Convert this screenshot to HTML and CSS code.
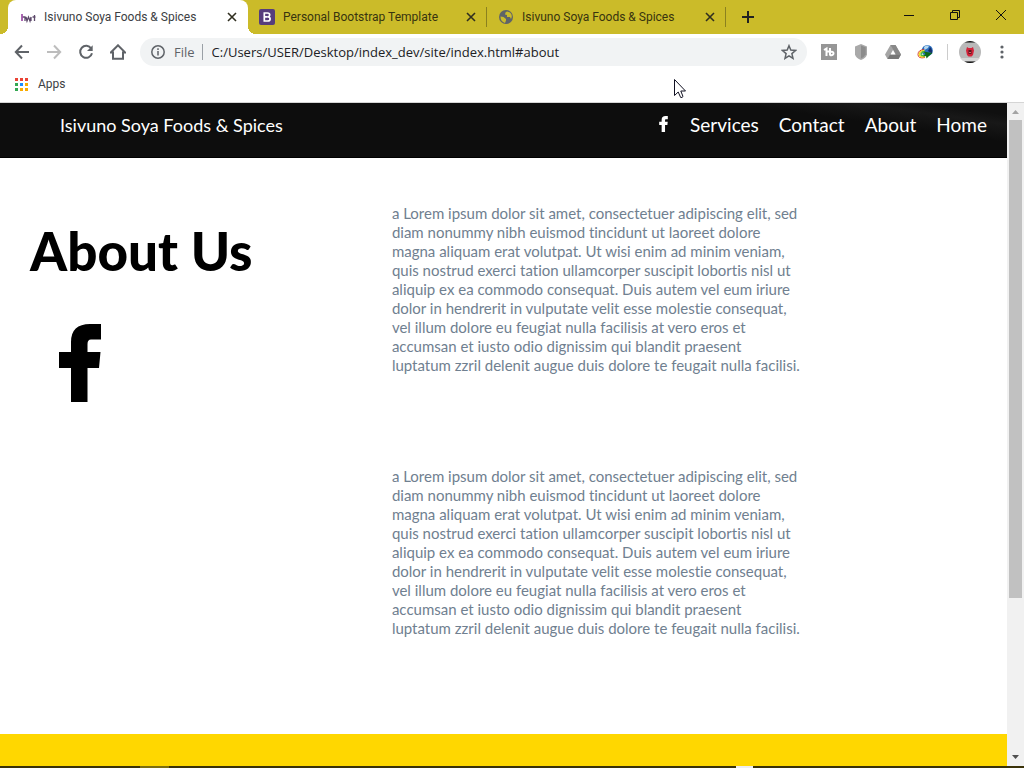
FILE: index.html
```
<!DOCTYPE html>
<html lang="en">
<head>
<meta charset="utf-8">
<title>Isivuno Soya Foods &amp; Spices</title>
<link rel="stylesheet" href="styles.css">
</head>
<body>
<div class="window">
  <div class="tabstrip">
    <div class="tab tab-active">
      <svg class="favicon" viewBox="0 0 16 16"><path d="M2 5v7M2 8h3v4M6 8l1 4 1.500-4 1.500 4 1-4M11 12V8M14.500 6v6M12.500 8h3" fill="none" stroke="#5d4a6b" stroke-width="1.300"/><path d="M2 5v7" stroke="#b05bb8" stroke-width="1.500"/></svg>
      <span class="tab-title">Isivuno Soya Foods &amp; Spices</span>
      <button class="tab-close" aria-label="Close tab"><svg viewBox="0 0 16 16"><path d="M4 4l8 8M12 4l-8 8"/></svg></button>
    </div>
    <div class="tab tab-ruled">
      <svg class="favicon" viewBox="0 0 16 16"><rect width="16" height="16" rx="2" fill="#563d7c"/><path d="M5.300 4h3.200q2.200 0 2.200 1.900 0 1.600-1.600 1.900 2 .2 2 2.100 0 2.100-2.500 2.100H5.300zM5.300 7.800h3.500" fill="none" stroke="#fff" stroke-width="1.700"/></svg>
      <span class="tab-title">Personal Bootstrap Template</span>
      <button class="tab-close" aria-label="Close tab"><svg viewBox="0 0 16 16"><path d="M4 4l8 8M12 4l-8 8"/></svg></button>
    </div>
    <div class="tab tab-ruled">
      <svg class="favicon" viewBox="0 0 16 16"><circle cx="8" cy="8" r="7" fill="#5f6368"/><path d="M2.500 7.500l3 .5 2.500 2v1.500l-1 2.500Q2.500 12.500 2.500 7.500zM9 2.500l-1.500 1-.5 2 2 .5v2h3l1 2q2-4-1-6.500z" fill="#cbbb29"/></svg>
      <span class="tab-title">Isivuno Soya Foods &amp; Spices</span>
      <button class="tab-close" aria-label="Close tab"><svg viewBox="0 0 16 16"><path d="M4 4l8 8M12 4l-8 8"/></svg></button>
    </div>
    <button class="new-tab" aria-label="New tab"><svg viewBox="0 0 16 16"><path d="M8 2v12M2 8h12"/></svg></button>
    <div class="window-controls">
      <button aria-label="Minimize"><svg viewBox="0 0 12 12"><path d="M1 6.500h10"/></svg></button>
      <button aria-label="Restore"><svg viewBox="0 0 12 12"><path d="M1.500 3.500h7v7h-7zM3.500 3.500v-2h7v7h-2"/></svg></button>
      <button aria-label="Close"><svg viewBox="0 0 12 12"><path d="M1 1l10 10M11 1L1 11"/></svg></button>
    </div>
  </div>

  <div class="toolbar">
    <button class="tool" aria-label="Back"><svg class="line" viewBox="0 0 16 16"><path d="M15 8H2M8 1.500L1.800 8 8 14.500"/></svg></button>
    <button class="tool" aria-label="Forward" disabled><svg class="line faint" viewBox="0 0 16 16"><path d="M1 8h13M8 1.500L14.200 8 8 14.500"/></svg></button>
    <button class="tool" aria-label="Reload"><svg class="line" viewBox="0 0 16 16"><path d="M13.200 4.500A6 6 0 1 0 14 9.300"/><path d="M14.700 1.200v5.800H9z" fill="#5f6368" stroke="none"/></svg></button>
    <button class="tool" aria-label="Home"><svg class="line" viewBox="0 0 16 16"><path d="M.8 8.500L8 1.300l7.200 7.200H13v6.300H3V8.500z"/></svg></button>
    <div class="omnibox">
      <svg class="line" viewBox="0 0 16 16"><circle cx="8" cy="8" r="6.200"/><path d="M8 7v4.500M8 4.200v1.700"/></svg>
      <span class="scheme">File</span>
      <input class="address" type="text" aria-label="Address" value="C:/Users/USER/Desktop/index_dev/site/index.html#about">
      <button class="star" aria-label="Bookmark this page"><svg class="line" viewBox="0 0 16 16"><path d="M8 1.700l1.800 4.400 4.700.4-3.600 3.100 1.100 4.700L8 11.800l-4 2.500 1.100-4.700-3.600-3.100 4.700-.4z"/></svg></button>
    </div>
    <div class="extensions">
      <button class="tool" aria-label="TubeBuddy"><svg viewBox="0 0 16 16"><path d="M0 0h16v16H0z" fill="#969696"/><path d="M3 6l2.500-1.500V12M9 4v7.500M5.500 7.500H9M9 8q3.500-1 3.500 1.300 0 2.500-3.500 1.700" fill="none" stroke="#fff" stroke-width="2"/></svg></button>
      <button class="tool" aria-label="Shield"><svg viewBox="0 0 16 16"><path d="M8 0l6 2.500v8Q13 14 8 16 3 14 2 10.500v-8z" fill="#a9a9a9"/><path d="M8 1.500l4.700 1.800v7Q11.500 13 8 14.500z" fill="#8c8c8c"/></svg></button>
      <button class="tool" aria-label="Drive"><svg viewBox="0 0 16 16"><path d="M5.500 1h5L16 10.500 13.500 15h-11L0 10.500z" fill="#a5a5a5"/><path d="M5.500 1h5L16 10.500h-5z" fill="#888"/><path d="M5 10.500h11L13.500 15h-11z" fill="#777"/><path d="M8 6l2.500 4.500h-5z" fill="#fff"/></svg></button>
      <button class="tool" aria-label="Download manager"><svg viewBox="0 0 16 16"><circle cx="10.300" cy="6.500" r="5.500" fill="#2a6fc0"/><path d="M7 3q2-2 5-1.200l-1 2.200-3.500 2z" fill="#b8d8ee"/><path d="M13 3q3 3 2 6.500L11 7z" fill="#16306c"/><path d="M8 13.500Q1 15 1 10.500 1 6 7 5.500" fill="none" stroke="#d4382f"/><path d="M8 12.500Q2 13.500 2.300 10.300 2.500 7 7.500 6.500" fill="none" stroke="#f1dc28" stroke-width="1.500"/><path d="M8.500 11.500q-5 .5-4.500-1.300Q4.500 8 8 7.800" fill="none" stroke="#49b846" stroke-width="1.500"/><path d="M6.500 7.500L15.500 9l-2 1.500-4 4-.5-2.500-3 .5 2.500-2.500z" fill="#0f6b18"/></svg></button>
      <span class="divider"></span>
      <button class="tool" aria-label="Profile"><svg class="avatar" viewBox="0 0 22 22"><circle cx="11" cy="11" r="11" fill="#b9b9b9"/><path d="M5.500 1.500Q11-1.500 16.500 1.500z M5.500 20.500q5.500 3 11 0z" fill="#111"/><path d="M1 17h20l-3 3H4z" fill="#d5d5d5"/><path d="M8 6l1.500 1h3L14 6l1 3.500-1 4.500-1.500 1.500h-3L8 14l-1-4.500z" fill="#d32239"/><path d="M9.500 9h3v4h-3z" fill="#5d1720"/><path d="M10 11h2v1h-2z" fill="#c66"/></svg></button>
      <button class="tool" aria-label="Menu"><svg viewBox="0 0 16 16" fill="#5f6368"><circle cx="8" cy="3" r="1.600"/><circle cx="8" cy="8" r="1.600"/><circle cx="8" cy="13" r="1.600"/></svg></button>
    </div>
  </div>

  <div class="bookmarks">
    <a class="apps" href="#apps">
      <svg viewBox="0 0 13 13"><path d="M0 0h3v3H0zM5 0h3v3H5zM10 0h3v3h-3z" fill="#ea4335"/><path d="M0 5h3v3H0zM0 10h3v3H0z" fill="#34a853"/><path d="M5 5h3v3H5z" fill="#1a8cff"/><path d="M10 5h3v3h-3zM5 10h3v3H5zM10 10h3v3h-3z" fill="#f9ab00"/></svg>
      <span>Apps</span>
    </a>
  </div>

  <div class="viewport">
    <div class="page">
      <header class="site-header">
        <a class="brand" href="#home">Isivuno Soya Foods &amp; Spices</a>
        <nav class="site-nav">
          <a href="#facebook" aria-label="Facebook"><svg class="fb-small" viewBox="0 0 42 78"><path d="M12 78V44H0V28h12V18Q12 0 31 0h11v15.500H32Q28.500 15.500 28.500 20v8h13L40 44H28.500v34z"/></svg></a>
          <a href="#services">Services</a>
          <a href="#contact">Contact</a>
          <a href="#about">About</a>
          <a href="#home">Home</a>
        </nav>
      </header>
      <main class="about" id="about">
        <div class="about-title">
          <h1>About Us</h1>
          <a href="#facebook" aria-label="Facebook"><svg class="fb-large" viewBox="0 0 42 78"><path d="M12 78V44H0V28h12V18Q12 0 31 0h11v15.500H32Q28.500 15.500 28.500 20v8h13L40 44H28.500v34z"/></svg></a>
        </div>
        <div class="about-text">
          <p>a Lorem ipsum dolor sit amet, consectetuer adipiscing elit, sed<br>diam nonummy nibh euismod tincidunt ut laoreet dolore<br>magna aliquam erat volutpat. Ut wisi enim ad minim veniam,<br>quis nostrud exerci tation ullamcorper suscipit lobortis nisl ut<br>aliquip ex ea commodo consequat. Duis autem vel eum iriure<br>dolor in hendrerit in vulputate velit esse molestie consequat,<br>vel illum dolore eu feugiat nulla facilisis at vero eros et<br>accumsan et iusto odio dignissim qui blandit praesent<br>luptatum zzril delenit augue duis dolore te feugait nulla facilisi.</p>
          <p>a Lorem ipsum dolor sit amet, consectetuer adipiscing elit, sed<br>diam nonummy nibh euismod tincidunt ut laoreet dolore<br>magna aliquam erat volutpat. Ut wisi enim ad minim veniam,<br>quis nostrud exerci tation ullamcorper suscipit lobortis nisl ut<br>aliquip ex ea commodo consequat. Duis autem vel eum iriure<br>dolor in hendrerit in vulputate velit esse molestie consequat,<br>vel illum dolore eu feugiat nulla facilisis at vero eros et<br>accumsan et iusto odio dignissim qui blandit praesent<br>luptatum zzril delenit augue duis dolore te feugait nulla facilisi.</p>
        </div>
      </main>
      <footer class="site-footer"></footer>
    </div>
    <div class="scrollbar">
      <svg viewBox="0 0 17 17"><path d="M5 11l3.500-4 3.500 4z" fill="#a3a3a3"/></svg>
      <div class="track"><div class="thumb"></div></div>
      <svg viewBox="0 0 17 17"><path d="M5 6l3.500 4L12 6z" fill="#505050"/></svg>
    </div>
  </div>
  <div class="taskbar"><span class="task-dim"></span><span class="task-lit"></span></div>
</div>
<svg class="cursor" viewBox="0 0 12 20"><path d="M.5.500v16l3.700-3.500 2.500 5.500q1.500.3 2.300-1L6.800 12h4.700z" fill="#fff" stroke="#111122"/></svg>
</body>
</html>
```
FILE: styles.css
```
* { box-sizing: border-box; }
body { margin: 0; background: #fff; font-family: "Segoe UI", Roboto, "Open Sans", sans-serif; font-size: 12px; color: #3c4043; }
button { margin: 0; padding: 0; border: 0; background: none; display: flex; align-items: center; justify-content: center; }
svg { display: block; flex: none; }
a { color: inherit; text-decoration: none; }

.window { display: flex; flex-direction: column; height: 100vh; overflow: hidden; }

.tabstrip { display: flex; height: 34px; flex: none; padding-left: 8px; background: #cbbb29; }
.tab { position: relative; display: flex; align-items: center; gap: 8px; flex: 0 1 239px; min-width: 0; padding: 0 8px 0 11px; color: #38340f; }
.tab-active { flex-basis: 240px; padding-left: 12px; background: #fff; border-radius: 8px 8px 0 0; color: #3c4043; }
.tab-active::before, .tab-active::after { content: ""; position: absolute; bottom: 0; width: 8px; height: 8px; }
.tab-active::before { right: 100%; background: radial-gradient(circle at 0 0, #cbbb29 8px, #fff 8px); }
.tab-active::after { left: 100%; background: radial-gradient(circle at 100% 0, #cbbb29 8px, #fff 8px); }
.tab-ruled::after { content: ""; position: absolute; right: 0; top: 7px; height: 20px; width: 1px; background: #8b811f; }
.favicon { width: 16px; height: 16px; }
.tab-title { flex: 1; min-width: 0; white-space: nowrap; overflow: hidden; }
.tab-close svg { width: 16px; height: 16px; fill: none; stroke: #302f20; stroke-width: 1.6; }
.new-tab { width: 44px; }
.new-tab svg { width: 16px; height: 16px; fill: none; stroke: #222; stroke-width: 2; }
.window-controls { display: flex; margin-left: auto; height: 29px; }
.window-controls button { width: 46px; }
.window-controls svg { width: 12px; height: 12px; fill: none; stroke: #111; }

.toolbar { display: flex; align-items: center; height: 36px; flex: none; padding: 0 6px; background: #fff; }
.tool { width: 32px; height: 32px; }
.tool svg { width: 16px; height: 16px; }
.tool .avatar { width: 22px; height: 22px; }
.line { fill: none; stroke: #5f6368; stroke-width: 2; }
.faint { stroke: #bdbdbd; }
.omnibox { display: flex; align-items: center; flex: 1; min-width: 0; height: 28px; margin: 0 6px; padding: 0 10px; border-radius: 14px; background: #f1f3f4; font-family: "Segoe UI", "Open Sans", "Noto Sans", sans-serif; font-size: 13px; }
.omnibox svg { width: 16px; height: 16px; stroke-width: 1.5; }
.scheme { margin-left: 8px; padding-right: 7px; border-right: 1px solid #9aa0a6; line-height: 16px; color: #5f6368; }
.address { flex: 1; min-width: 0; padding: 0 0 0 9px; border: 0; background: none; font: inherit; color: #202124; outline: 0; }
.extensions { display: flex; align-items: center; }
.divider { width: 1px; height: 16px; margin: 0 6px; background: #ccc; }

.bookmarks { display: flex; align-items: center; height: 33px; flex: none; padding: 0 15px 4px; border-bottom: 1px solid #d5d5d5; background: #fff; }
.apps { display: flex; align-items: center; gap: 10px; }
.apps svg { width: 13px; height: 13px; }

.viewport { display: flex; flex: 1; min-height: 0; }
.page { flex: 1; min-width: 0; overflow: hidden; background: #fff; font-family: "Gill Sans MT", "Gill Sans", Lato, sans-serif; font-variant-ligatures: none; }
.site-header { display: flex; align-items: flex-start; justify-content: space-between; height: 55px; padding: 10px 20px 0 60px; background: linear-gradient(188deg, #101010 6%, #181818 11%, #0d0d0d 20%); color: #fff; font-size: 19px; line-height: 24px; border-bottom: 1px solid #000; }
.brand { font-size: 18px; }
.site-nav { display: flex; gap: 20px; }
.site-nav a:first-child { padding: 3px 2px 0 0; }
.fb-small { width: 9px; height: 16px; fill: #fff; }
.about { display: grid; grid-template-columns: 36% 1fr; padding: 46px 30px 96px; }
h1 { margin: 14px 0 41px; font-size: 53px; line-height: 65px; font-weight: 900; color: #000; }
.fb-large { width: 42px; height: 78px; margin-left: 29px; }
.about-text { display: grid; gap: 92px; padding-left: 21px; }
.about-text p { margin: 0; font-size: 15px; line-height: 19px; color: #708090; white-space: nowrap; }
.site-footer { height: 240px; background: #ffd700; }

.scrollbar { display: flex; flex-direction: column; width: 17px; background: #f1f1f1; }
.scrollbar svg { width: 17px; height: 17px; }
.track { flex: 1; padding: 0 2px; }
.thumb { height: 76%; background: #c1c1c1; }

.taskbar { display: flex; height: 2px; flex: none; padding-left: 140px; background: #3a3208; }
.task-dim { width: 29px; background: #7c6e10; }
.task-lit { width: 17px; margin-left: 567px; background: #eee; }

.cursor { position: absolute; left: 674px; top: 79px; width: 12px; height: 20px; }
```
